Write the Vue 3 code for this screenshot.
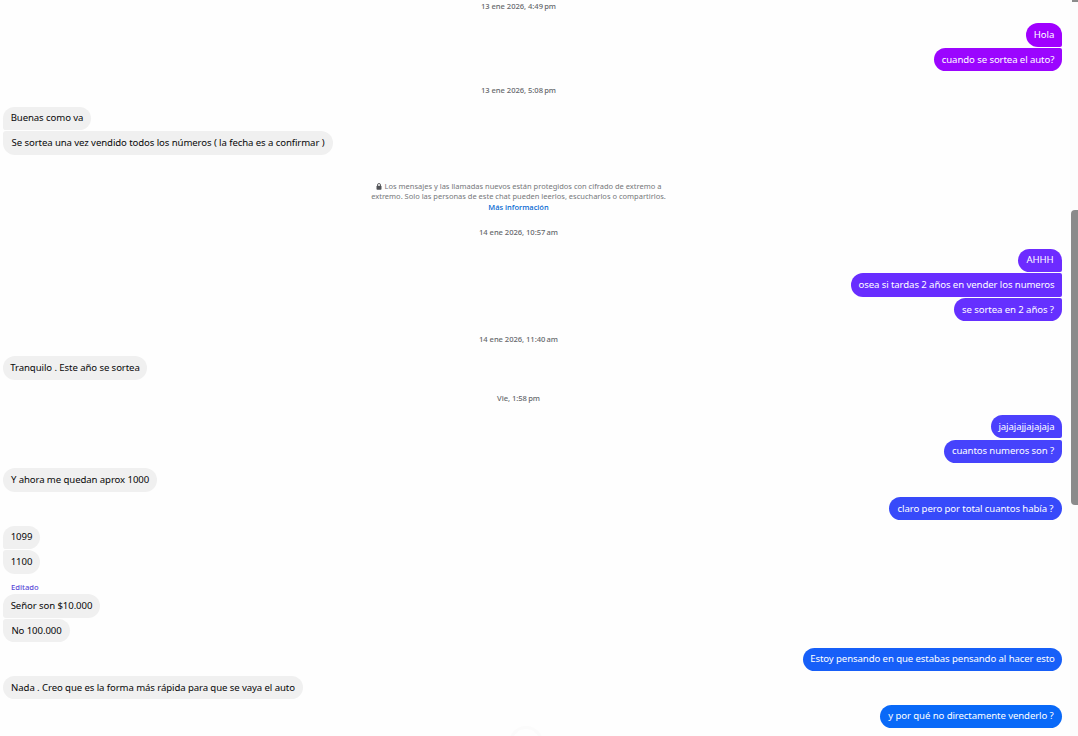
<template>
  <div class="chat">
    <main class="chat__messages">
      <div
        v-for="(item, index) in items"
        :key="index"
        :class="['row', `row--${item.type}`]"
        :style="{ marginTop: `${item.gap}px`, height: `${item.height}px` }"
      >
        <div
          v-if="item.type === 'in' || item.type === 'out'"
          :class="[
            'bubble',
            item.group && `bubble--${item.group}`,
            { 'bubble--raised': item.raised },
          ]"
          :style="{ width: `${item.width}px`, background: item.color }"
        >
          <span>{{ item.text }}</span>
        </div>
        <p v-else-if="item.type === 'notice'" class="notice">
          <span class="notice__line notice__line--first">
            <svg class="notice__lock" viewBox="0 0 12 14">
              <path d="M3 6V4a3 3 0 0 1 6 0v2" fill="none" stroke="currentColor" stroke-width="1.8" />
              <rect x="1" y="5.5" width="10" height="8" rx="1.5" fill="currentColor" />
            </svg>
            Los mensajes y las llamadas nuevos están protegidos con cifrado de extremo a
          </span>
          <span class="notice__line">extremo. Solo las personas de este chat pueden leerlos, escucharlos o compartirlos.</span>
          <a class="notice__link">Más información</a>
        </p>
        <span v-else>{{ item.text }}</span>
      </div>
      <div class="chat__scroll-down"></div>
    </main>
    <aside class="scrollbar">
      <div class="scrollbar__button"></div>
      <div class="scrollbar__thumb"></div>
    </aside>
  </div>
</template>

<script setup>
const items = [
  { type: 'date', gap: 0, height: 12, text: '13 ene 2026, 4:49\u202fpm' },
  { type: 'out', gap: 11, height: 24, width: 36, color: '#a000ff', group: 'first', text: 'Hola' },
  { type: 'out', gap: 1, height: 23, width: 128, color: '#9b05ff', group: 'last', text: 'cuando se sortea el auto?' },
  { type: 'date', gap: 13, height: 12, text: '13 ene 2026, 5:08\u202fpm' },
  { type: 'in', gap: 11, height: 23, width: 88, group: 'first', raised: true, text: 'Buenas como va' },
  { type: 'in', gap: 1, height: 24, width: 330, group: 'last', text: 'Se sortea una vez vendido todos los números ( la fecha es a confirmar )' },
  { type: 'notice', gap: 25, height: 32 },
  { type: 'date', gap: 14, height: 12, text: '14 ene 2026, 10:57\u202fam' },
  { type: 'out', gap: 11, height: 23, width: 44, color: '#6d2bff', group: 'first', raised: true, text: 'AHHH' },
  { type: 'out', gap: 1, height: 24, width: 211, color: '#682dff', group: 'middle', text: 'osea si tardas 2 años en vender los numeros' },
  { type: 'out', gap: 1, height: 23, width: 108, color: '#6530ff', group: 'last', text: 'se sortea en 2 años ?' },
  { type: 'date', gap: 12, height: 12, text: '14 ene 2026, 11:40\u202fam' },
  { type: 'in', gap: 11, height: 24, width: 144, text: 'Tranquilo . Este año se sortea' },
  { type: 'date', gap: 12, height: 12, text: 'Vie, 1:58\u202fpm' },
  { type: 'out', gap: 11, height: 23, width: 71, color: '#4c40fd', group: 'first', text: 'jajajajjajajaja' },
  { type: 'out', gap: 2, height: 23, width: 118, color: '#4643fc', group: 'last', raised: true, text: 'cuantos numeros son ?' },
  { type: 'in', gap: 5, height: 24, width: 154, text: 'Y ahora me quedan aprox 1000' },
  { type: 'out', gap: 5, height: 23, width: 173, color: '#374afa', text: 'claro pero por total cuantos había ?' },
  { type: 'in', gap: 6, height: 23, width: 37, group: 'first', raised: true, text: '1099' },
  { type: 'in', gap: 1, height: 24, width: 37, group: 'last', text: '1100' },
  { type: 'edited', gap: 7, height: 12, text: 'Editado' },
  { type: 'in', gap: 1, height: 24, width: 97, group: 'first', text: 'Señor son $10.000' },
  { type: 'in', gap: 1, height: 23, width: 67, group: 'last', text: 'No 100.000' },
  { type: 'out', gap: 6, height: 23, width: 259, color: '#175ff8', raised: true, text: 'Estoy pensando en que estabas pensando al hacer esto' },
  { type: 'in', gap: 5, height: 23, width: 300, text: 'Nada . Creo que es la forma más rápida para que se vaya el auto' },
  { type: 'out', gap: 6, height: 23, width: 182, color: '#0969f8', raised: true, text: 'y por qué no directamente venderlo ?' },
];
</script>

<style>
body {
  background: #fefefe;
  overflow: hidden;
}
</style>

<style scoped>
.chat {
  display: flex;
  height: 736px;
  overflow: hidden;
  font-family: 'Noto Sans', 'Open Sans', sans-serif;
  font-size: 9.6px;
  color: #080809;
}

.chat__messages {
  display: flex;
  flex-direction: column;
  width: 1059px;
  padding: 0 8px 0 3px;
}

.row {
  display: flex;
  flex-shrink: 0;
}

.row--out {
  justify-content: flex-end;
  color: #ffffff;
}

.row--date,
.row--notice {
  justify-content: center;
  align-items: center;
  padding-right: 28px;
}

.row--date {
  color: #65686c;
  font-size: 7.6px;
  font-weight: 500;
  letter-spacing: -0.04px;
}

.row--edited {
  align-items: center;
  padding-left: 8px;
  color: #5b4bd6;
  font-size: 7.6px;
  font-weight: 500;
}

.bubble {
  box-sizing: border-box;
  display: flex;
  align-items: center;
  justify-content: center;
  padding-bottom: 1px;
  border-radius: 12px;
  background: #f0f0f0;
  letter-spacing: -0.09px;
  white-space: nowrap;
}

.bubble--raised {
  padding-bottom: 3px;
}

.row--in .bubble--first {
  border-bottom-left-radius: 3px;
}

.row--in .bubble--last {
  border-top-left-radius: 3px;
}

.row--out .bubble--first {
  border-bottom-right-radius: 2px;
}

.row--out .bubble--middle {
  border-top-right-radius: 2px;
  border-bottom-right-radius: 2px;
}

.row--out .bubble--last {
  border-top-right-radius: 2px;
}

.notice {
  display: flex;
  flex-direction: column;
  align-items: center;
  margin: 0;
  color: #75777a;
  font-size: 7.5px;
  line-height: 10px;
  white-space: nowrap;
}

.notice__line--first {
  display: flex;
  align-items: center;
  gap: 3px;
}

.notice__lock {
  width: 6px;
  height: 7px;
  margin-top: 1px;
  color: #505256;
}

.notice__link {
  margin-top: 1px;
  color: #0064d1;
  font-weight: 500;
}

.chat__scroll-down {
  flex-shrink: 0;
  align-self: center;
  box-sizing: border-box;
  width: 34px;
  height: 34px;
  margin: -2px 14px 0 0;
  border: 3px solid #fbfbfb;
  border-radius: 50%;
}

.scrollbar {
  width: 8px;
  background: #fcfcfc;
}

.scrollbar__button {
  width: 6px;
  height: 2px;
  margin-left: 2px;
  background: #8b8b8b;
}

.scrollbar__thumb {
  height: 295px;
  margin: 208px 0 0 1px;
  border-radius: 4px 0 0 4px;
  background: #8b8b8b;
}
</style>
